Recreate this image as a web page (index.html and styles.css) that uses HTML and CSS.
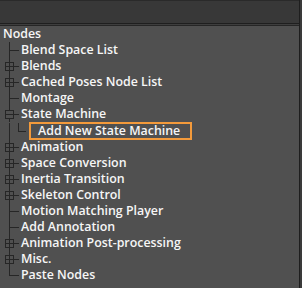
FILE: index.html
```html
<!DOCTYPE html>
<html lang="en">
<head>
    <meta charset="UTF-8">
    <title>Nodes</title>
    <link rel="stylesheet" href="styles.css">
</head>
<body>

<div class="frame">

    <div class="topbar"></div>

    <div class="panel">
        <div class="root">Nodes</div>

        <ul class="tree">
            <li class="row"><span class="twig"></span>Blend Space List</li>
            <li class="row"><span class="twig"><i class="box plus"></i></span>Blends</li>
            <li class="row"><span class="twig"><i class="box plus"></i></span>Cached Poses Node List</li>
            <li class="row"><span class="twig"></span>Montage</li>
            <li class="row"><span class="twig"><i class="box minus"></i></span>State Machine</li>
            <li class="row child">
                <span class="twig pass"></span><span class="twig sub"></span>
                <span class="picked">Add New State Machine</span>
            </li>
            <li class="row"><span class="twig"><i class="box plus"></i></span>Animation</li>
            <li class="row"><span class="twig"><i class="box plus"></i></span>Space Conversion</li>
            <li class="row"><span class="twig"><i class="box plus"></i></span>Inertia Transition</li>
            <li class="row"><span class="twig"><i class="box plus"></i></span>Skeleton Control</li>
            <li class="row"><span class="twig"></span>Motion Matching Player</li>
            <li class="row"><span class="twig"></span>Add Annotation</li>
            <li class="row"><span class="twig"><i class="box plus"></i></span>Animation Post-processing</li>
            <li class="row"><span class="twig"><i class="box plus"></i></span>Misc.</li>
            <li class="row last"><span class="twig"></span>Paste Nodes</li>
        </ul>
    </div>

</div>

</body>
</html>
```

FILE: styles.css
```css
*{
    margin:0;
    padding:0;
}

body{
    background-color: #3a3a3a;
    font-family: "Open Sans", "Noto Sans", sans-serif;
    font-weight: 600;
    font-size: 12.4px;
    color: #f6f6f6;
}

.frame{
    width: 299px;
    height: 288px;
    border-right: 1px solid #1e1e1e;
}

.topbar{
    height: 22px;
    background-color: #383838;
    border-top: 1px solid #2a2a2a;
    border-bottom: 1px solid #1f1f1f;
    box-shadow: 0 1px 0 #3e3e3e;
}

.panel{
    margin-top: 1px;
    height: 263px;
    background-color: #505050;
    border-top: 1px solid #262626;
}

.root{
    height: 16px;
    line-height: 16px;
    padding-left: 3px;
}

.tree{
    list-style: none;
}

.row{
    display: flex;
    align-items: center;
    height: 16px;
    line-height: 16px;
    white-space: nowrap;
}

.twig{
    position: relative;
    flex: none;
    width: 21px;
    height: 16px;
}

/* vertical line */
.twig::before{
    content: "";
    position: absolute;
    left: 9px;
    top: 0;
    bottom: 0;
    width: 1px;
    background-color: #262626;
}

/* horizontal line */
.twig::after{
    content: "";
    position: absolute;
    left: 9px;
    top: 8px;
    width: 10px;
    height: 1px;
    background-color: #262626;
}

.last .twig::before{
    bottom: 8px;
}

.twig.pass{
    width: 18px;
}

.twig.pass::after{
    display: none;
}

.twig.sub{
    width: 13px;
}

.twig.sub::before{
    left: 0;
    bottom: 7px;
}

.twig.sub::after{
    left: 0;
    top: 8px;
    width: 8px;
}

.box{
    position: absolute;
    left: 5px;
    top: 4px;
    width: 7px;
    height: 7px;
    border: 1px solid #262626;
    background-color: #505050;
    z-index: 1;
}

.box::before,
.box.plus::after{
    content: "";
    position: absolute;
    background-color: #262626;
}

.box::before{
    left: 0;
    top: 3px;
    width: 7px;
    height: 1px;
}

.box.plus::after{
    left: 3px;
    top: 0;
    width: 1px;
    height: 7px;
}

.child{
    height: 17px;
}

.picked{
    height: 14px;
    line-height: 14px;
    margin-left: -2px;
    padding: 0 10px 0 7px;
    border: 2px solid #f39a3b;
    position: relative;
    z-index: 1;
}
```
